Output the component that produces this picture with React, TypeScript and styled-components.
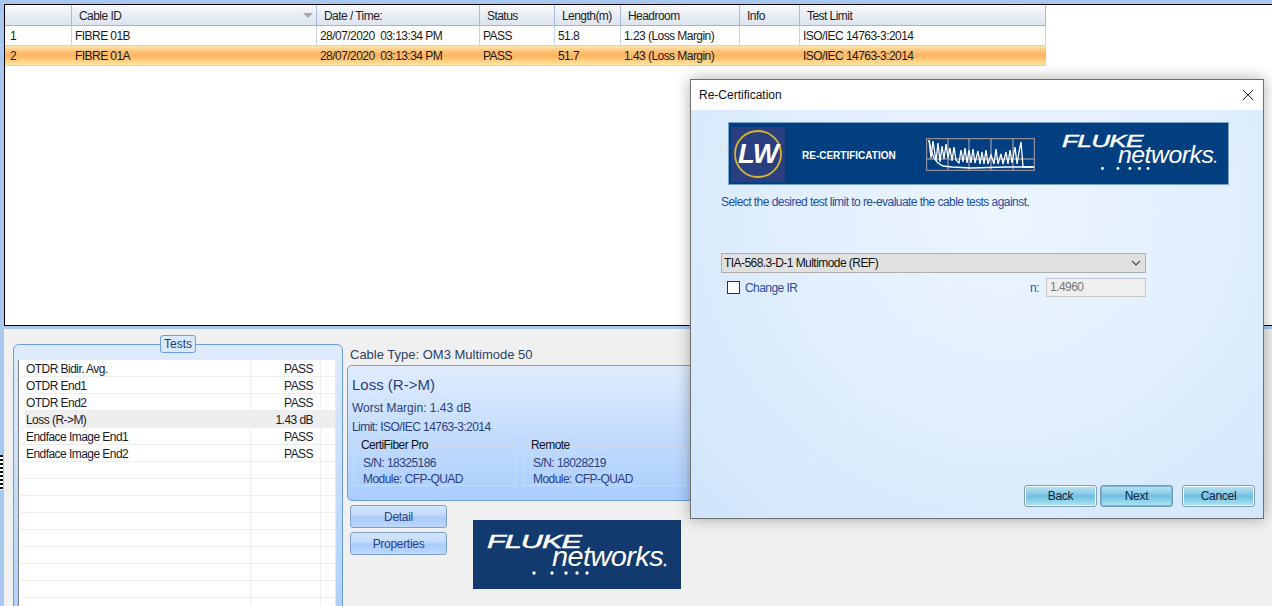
import * as React from 'react';
import styled, { createGlobalStyle } from 'styled-components';

const GlobalStyle = createGlobalStyle`
  html, body {
    margin: 0;
    padding: 0;
    background: #f0f0f0;
  }
  body {
    font-family: 'Liberation Sans', Arial, sans-serif;
    font-size: 12px;
    letter-spacing: -0.55px;
    color: #111;
  }
`;

const Page = styled.div`
  position: relative;
  display: flex;
  width: 1272px;
  height: 606px;
  overflow: hidden;
`;

const Rail = styled.div`
  flex: none;
  width: 4px;
  height: 606px;
  padding-top: 455px;
  box-sizing: border-box;
  background: #a9c8f0;
`;

const RailDots = styled.div`
  width: 3px;
  height: 35px;
  background: repeating-linear-gradient(180deg, #111 0 2px, #fff 2px 4px);
`;

const Main = styled.div`
  flex: 1;
  display: flex;
  flex-direction: column;
  min-width: 0;
`;

const TopStrip = styled.div`
  flex: none;
  height: 4px;
  background: #a9c8f0;
`;

const GridPanel = styled.div`
  flex: none;
  height: 322px;
  box-sizing: border-box;
  border: 1px solid #000;
  border-right: 0;
  background: #fff;
`;

const COLUMNS = '67px 245px 163px 75px 66px 119px 60px 246px';

const Table = styled.div`
  width: 1041px;
`;

const HeaderRow = styled.div`
  display: grid;
  grid-template-columns: ${COLUMNS};
  height: 21px;
  box-sizing: border-box;
  border-bottom: 1px solid #9fb6d3;
  background: linear-gradient(180deg, #f7f9fc 0%, #e9eef5 50%, #dce4ee 100%);
`;

const HeaderCell = styled.div`
  position: relative;
  display: flex;
  align-items: center;
  padding: 2px 0 0 7px;
  border-right: 1px solid #a6bcd8;
  color: #1d1d1d;
  white-space: nowrap;
`;

const SortMark = styled.span`
  position: absolute;
  right: 3px;
  top: 8px;
  width: 0;
  height: 0;
  border-left: 5px solid transparent;
  border-right: 5px solid transparent;
  border-top: 5px solid #a8a8a8;
`;

const Row = styled.div<{ $selected?: boolean }>`
  display: grid;
  grid-template-columns: ${COLUMNS};
  height: 20px;
  box-sizing: border-box;
  border-bottom: 1px solid #c6d5e9;
  background: ${(p) =>
    p.$selected
      ? 'linear-gradient(180deg, #fde6ad 0%, #fdc67e 25%, #fdb45f 50%, #fdca7c 72%, #fde49c 100%)'
      : '#fff'};
`;

const Cell = styled.div<{ $selected?: boolean }>`
  display: flex;
  align-items: center;
  padding-left: 3px;
  border-right: 1px solid ${(p) => (p.$selected ? 'transparent' : '#c6d5e9')};
  color: #1a1a1a;
  white-space: pre;

  &:first-child {
    padding-left: 5px;
  }
`;

const Bottom = styled.div`
  flex: 1;
  display: flex;
  gap: 4px;
  padding: 15px 0 0 9px;
  border-top: 3px solid #a9c8f0;
  min-height: 0;
`;

const TestsGroup = styled.div`
  position: relative;
  flex: none;
  width: 330px;
  height: 300px;
  box-sizing: border-box;
  padding: 15px 6px 0 4px;
  border: 1px solid #6d9ce0;
  border-radius: 6px;
  background: linear-gradient(180deg, #dfebfc 0%, #a9cdfd 100%);
`;

const TestsTitle = styled.div`
  position: absolute;
  left: 146px;
  top: -10px;
  width: 36px;
  height: 18px;
  box-sizing: border-box;
  display: flex;
  align-items: center;
  justify-content: center;
  border: 1px solid #6d9ce0;
  border-radius: 3px;
  background: #dbe9fc;
  letter-spacing: 0;
  color: #24406f;
`;

const TestList = styled.div`
  height: 290px;
  box-sizing: border-box;
  padding-left: 1px;
  border-left: 1px solid #808080;
  border-right: 1px solid #e8e8e8;
  background: #fff;
`;

const TestRow = styled.div<{ $active?: boolean }>`
  display: grid;
  grid-template-columns: 231px 70px 15px;
  height: 17px;
  box-sizing: border-box;
  border-bottom: 1px solid #eeeeee;
  background: ${(p) =>
    p.$active ? 'linear-gradient(90deg, #fff 0 5px, #eeeeee 5px)' : '#fff'};
`;

const TestName = styled.div`
  display: flex;
  align-items: center;
  padding: 1px 0 0 6px;
  border-right: 1px solid #eeeeee;
  color: #1a1a2a;
`;

const TestValue = styled.div`
  display: flex;
  align-items: center;
  justify-content: flex-end;
  padding: 1px 7px 0 0;
  border-right: 1px solid #eeeeee;
  color: #1a1a2a;
`;

const Details = styled.div`
  flex: none;
  width: 600px;
`;

const CableType = styled.div`
  margin: 4px 0 3px 3px;
  height: 14px;
  line-height: 14px;
  font-size: 13px;
  letter-spacing: 0;
  color: #2b3f66;
`;

const ResultPanel = styled.div`
  height: 136px;
  box-sizing: border-box;
  padding: 10px 0 0 4px;
  border: 1px solid #6d9ce0;
  border-radius: 5px;
  background: linear-gradient(180deg, #e0ecfd 0%, #a9cdfd 100%);
  color: #2b3f7a;
`;

const ResultTitle = styled.div`
  height: 18px;
  line-height: 18px;
  font-size: 15px;
  letter-spacing: 0;
`;

const ResultLine = styled.div`
  height: 19px;
  line-height: 19px;
`;

const Worst = styled(ResultLine)`
  margin-top: 5px;
  letter-spacing: 0;
`;

const Units = styled.div`
  display: flex;
  gap: 7px;
  margin: 3px 0 0 1px;
`;

const Unit = styled.fieldset`
  width: 163px;
  height: 46px;
  box-sizing: border-box;
  margin: 0;
  padding: 3px 0 0 9px;
  border: 1px solid #cfdbe8;
  line-height: 16px;
`;

const UnitName = styled.legend`
  margin-left: -2px;
  padding: 0;
  height: 12px;
  line-height: 11px;
  color: #111;
`;

const Actions = styled.div`
  display: flex;
  margin-top: 4px;
  padding-left: 3px;
`;

const ActionStack = styled.div`
  display: flex;
  flex-direction: column;
  gap: 4px;
`;

const ActionButton = styled.button`
  width: 97px;
  height: 23px;
  padding: 0;
  border: 1px solid #7d9fc9;
  border-radius: 3px;
  background: linear-gradient(180deg, #d3e5fc 0%, #c5dcfb 40%, #a9cbf8 55%, #bcd8fd 100%);
  font: 12px 'Liberation Sans', Arial, sans-serif;
  letter-spacing: -0.3px;
  color: #2b3f8a;
`;

const LogoBox = styled.div`
  width: 208px;
  height: 69px;
  margin: 15px 0 0 26px;
  background: #123a6e;
`;

const Dialog = styled.div`
  position: absolute;
  left: 690px;
  top: 79px;
  width: 574px;
  height: 440px;
  box-sizing: border-box;
  display: flex;
  flex-direction: column;
  border: 1px solid #6f6f6f;
  box-shadow: 0 0 14px rgba(0, 0, 0, 0.32);
  background: #fff;
`;

const DialogTitleBar = styled.div`
  flex: none;
  height: 30px;
  display: flex;
  align-items: center;
  justify-content: space-between;
  padding: 0 9px 0 8px;
  letter-spacing: 0;
  color: #111;
`;

const DialogBody = styled.div`
  flex: 1;
  display: flex;
  flex-direction: column;
  padding: 12px 0 11px 30px;
  background:
    linear-gradient(128deg, transparent 0 44%, rgba(255, 255, 255, 0.1) 44.2%, transparent 44.6%),
    linear-gradient(62deg, transparent 0 58%, rgba(255, 255, 255, 0.08) 58.2%, transparent 58.6%),
    radial-gradient(ellipse at 55% 25%, #ecf5ff 0%, #e2effd 45%, #d0e5fb 100%);
`;

const Banner = styled.div`
  flex: none;
  width: 501px;
  height: 63px;
  box-sizing: border-box;
  margin-left: 7px;
  display: flex;
  align-items: flex-start;
  border: 1px solid #7ba2cc;
  background: #023f80;
`;

const BadgeTile = styled.div`
  flex: none;
  width: 54px;
  height: 55px;
  margin: 4px 0 0 2px;
  background: #2a3f80;
`;

const BannerLabel = styled.div`
  flex: none;
  width: 108px;
  margin: 26px 0 0 17px;
  font-size: 10px;
  letter-spacing: 0;
  line-height: 14px;
  font-weight: bold;
  color: #fff;
  white-space: nowrap;
`;

const GraphSlot = styled.div`
  flex: none;
  margin: 15px 0 0 16px;
  width: 109px;
  height: 33px;
`;

const BannerLogo = styled.div`
  flex: none;
  margin-left: 15px;
`;

const Hint = styled.div`
  height: 14px;
  line-height: 14px;
  margin-top: 10px;
  color: #1f4fa5;
`;

const LimitSelect = styled.div`
  width: 425px;
  height: 20px;
  box-sizing: border-box;
  margin-top: 44px;
  display: flex;
  align-items: center;
  justify-content: space-between;
  padding: 0 4px 0 2px;
  border: 1px solid #adadad;
  background: #e1e1e1;
  color: #111;
`;

const OptionRow = styled.div`
  width: 425px;
  height: 19px;
  margin-top: 5px;
  box-sizing: border-box;
  padding-left: 6px;
  display: flex;
  align-items: center;
`;

const CheckBox = styled.span`
  width: 13px;
  height: 13px;
  box-sizing: border-box;
  border: 1px solid #333;
  background: #fff;
  margin-right: 5px;
`;

const BlueLabel = styled.span`
  color: #2b4f9e;
`;

const IndexLabel = styled(BlueLabel)`
  margin-left: auto;
  margin-right: 7px;
`;

const IndexInput = styled.div`
  width: 100px;
  height: 19px;
  box-sizing: border-box;
  padding-left: 3px;
  line-height: 17px;
  border: 1px solid #c9c9c9;
  background: #efefef;
  color: #777;
`;

const DialogFooter = styled.div`
  margin-top: auto;
  display: flex;
  justify-content: flex-end;
  padding-right: 8px;
`;

const WizardButton = styled.button<{ $focused?: boolean; $gapLeft?: number }>`
  width: 73px;
  height: 22px;
  padding: 0;
  margin-left: ${(p) => p.$gapLeft ?? 0}px;
  border: 1px solid ${(p) => (p.$focused ? '#6f9dbb' : '#7f9db5')};
  border-radius: 3px;
  box-shadow: inset 0 0 0 1px ${(p) => (p.$focused ? '#7fb2cf' : '#f2fbff')};
  background: linear-gradient(180deg, #b9e3f4 0%, #8fd0ea 35%, #6fbfe0 50%, #8fd4ea 75%, #aee3f2 100%);
  font: 12px 'Liberation Sans', Arial, sans-serif;
  letter-spacing: -0.3px;
  color: #10233f;
`;

const tableRows = [
  ['1', 'FIBRE 01B', '28/07/2020  03:13:34 PM', 'PASS', '51.8', '1.23 (Loss Margin)', '', 'ISO/IEC 14763-3:2014'],
  ['2', 'FIBRE 01A', '28/07/2020  03:13:34 PM', 'PASS', '51.7', '1.43 (Loss Margin)', '', 'ISO/IEC 14763-3:2014'],
];

const tests = [
  ['OTDR Bidir. Avg.', 'PASS'],
  ['OTDR End1', 'PASS'],
  ['OTDR End2', 'PASS'],
  ['Loss (R->M)', '1.43 dB'],
  ['Endface Image End1', 'PASS'],
  ['Endface Image End2', 'PASS'],
  ...Array.from({ length: 10 }, () => ['', '']),
];

const FlukeLogo = ({ scale }: { scale: number }) => (
  <svg width={208 * scale} height={69 * scale} viewBox="0 0 208 69" style={{ display: 'block' }}>
    <g fill="#fff" fontFamily="'Liberation Sans', Arial, sans-serif" fontStyle="italic">
      <text x="14" y="28" fontSize="19" stroke="#fff" strokeWidth="0.5" textLength="94" lengthAdjust="spacingAndGlyphs">FLUKE</text>
      <text x="79" y="46" fontSize="27" textLength="111" lengthAdjust="spacingAndGlyphs">networks</text>
      <circle cx="192" cy="45" r="1.5" opacity="0.8" />
      {[61, 79, 93, 104, 114].map((x) => (
        <circle key={x} cx={x} cy="53" r="1.7" />
      ))}
    </g>
  </svg>
);

const LwBadge = () => (
  <svg width="54" height="55" viewBox="0 0 54 55" style={{ display: 'block' }}>
    <circle cx="27" cy="27" r="23" fill="none" stroke="#d8b52e" strokeWidth="1.8" />
    <text
      x="27"
      y="36"
      textAnchor="middle"
      fill="#fff"
      fontFamily="'Liberation Sans', Arial, sans-serif"
      fontStyle="italic"
      fontWeight="bold"
      fontSize="27"
      textLength="40"
      lengthAdjust="spacingAndGlyphs"
    >
      LW
    </text>
  </svg>
);

const TRACE_A =
  '3,2 5,20 7,3 10,23 12,5 14,24 16,8 18,21 20,6 22,20 24,10 26,23 28,9 30,22 33,25 35,12 37,24 39,10 41,25 43,12 45,25 47,11 49,25 52,13 54,26 56,14 58,26 60,12 62,26 65,17 68,26 70,11 72,26 75,16 77,26 80,14 82,26 84,12 86,25 89,9 91,26 93,14 95,4 96,16 97,29 108,29';
const TRACE_B = '3,2 5,12 8,20 12,25 17,28 26,29 45,30 80,29 108,29';

const TraceGraph = () => (
  <svg width="109" height="33" viewBox="0 0 109 33" style={{ display: 'block' }}>
    <g stroke="#8f8f9f" strokeWidth="1.4" fill="none">
      <rect x="0.5" y="0.5" width="108" height="32" />
      <path d="M22 0V33M43 0V33M65 0V33M87 0V33M0 21H109" />
    </g>
    <polyline points={TRACE_A} fill="none" stroke="#fff" strokeWidth="1.3" />
    <polyline points={TRACE_B} fill="none" stroke="#fff" strokeWidth="1.3" />
  </svg>
);

export default function App() {
  return (
    <Page>
      <GlobalStyle />
      <Rail>
        <RailDots />
      </Rail>
      <Main>
        <TopStrip />
        <GridPanel>
          <Table>
            <HeaderRow>
              <HeaderCell />
              <HeaderCell>
                Cable ID
                <SortMark />
              </HeaderCell>
              <HeaderCell>Date / Time:</HeaderCell>
              <HeaderCell>Status</HeaderCell>
              <HeaderCell>Length(m)</HeaderCell>
              <HeaderCell>Headroom</HeaderCell>
              <HeaderCell>Info</HeaderCell>
              <HeaderCell>Test Limit</HeaderCell>
            </HeaderRow>
            {tableRows.map((cells, i) => (
              <Row key={cells[0]} $selected={i === 1}>
                {cells.map((text, j) => (
                  <Cell key={j} $selected={i === 1}>
                    {text}
                  </Cell>
                ))}
              </Row>
            ))}
          </Table>
        </GridPanel>
        <Bottom>
          <TestsGroup>
            <TestsTitle>Tests</TestsTitle>
            <TestList>
              {tests.map(([name, value], i) => (
                <TestRow key={i} $active={name.startsWith('Loss')}>
                  <TestName>{name}</TestName>
                  <TestValue>{value}</TestValue>
                  <div />
                </TestRow>
              ))}
            </TestList>
          </TestsGroup>
          <Details>
            <CableType>Cable Type: OM3 Multimode 50</CableType>
            <ResultPanel>
              <ResultTitle>Loss (R-&gt;M)</ResultTitle>
              <Worst>Worst Margin: 1.43 dB</Worst>
              <ResultLine>Limit: ISO/IEC 14763-3:2014</ResultLine>
              <Units>
                <Unit>
                  <UnitName>CertiFiber Pro</UnitName>
                  <div>S/N: 18325186</div>
                  <div>Module: CFP-QUAD</div>
                </Unit>
                <Unit>
                  <UnitName>Remote</UnitName>
                  <div>S/N: 18028219</div>
                  <div>Module: CFP-QUAD</div>
                </Unit>
              </Units>
            </ResultPanel>
            <Actions>
              <ActionStack>
                <ActionButton>Detail</ActionButton>
                <ActionButton>Properties</ActionButton>
              </ActionStack>
              <LogoBox>
                <FlukeLogo scale={1} />
              </LogoBox>
            </Actions>
          </Details>
        </Bottom>
      </Main>
      <Dialog>
        <DialogTitleBar>
          Re-Certification
          <svg width="12" height="12" viewBox="0 0 12 12">
            <path d="M1 1L11 11M11 1L1 11" stroke="#222" strokeWidth="1" fill="none" />
          </svg>
        </DialogTitleBar>
        <DialogBody>
          <Banner>
            <BadgeTile>
              <LwBadge />
            </BadgeTile>
            <BannerLabel>RE-CERTIFICATION</BannerLabel>
            <GraphSlot>
              <TraceGraph />
            </GraphSlot>
            <BannerLogo>
              <FlukeLogo scale={0.86} />
            </BannerLogo>
          </Banner>
          <Hint>Select the desired test limit to re-evaluate the cable tests against.</Hint>
          <LimitSelect>
            TIA-568.3-D-1 Multimode (REF)
            <svg width="10" height="6" viewBox="0 0 10 6">
              <path d="M1 1L5 5L9 1" stroke="#444" strokeWidth="1.1" fill="none" />
            </svg>
          </LimitSelect>
          <OptionRow>
            <CheckBox />
            <BlueLabel>Change IR</BlueLabel>
            <IndexLabel>n:</IndexLabel>
            <IndexInput>1.4960</IndexInput>
          </OptionRow>
          <DialogFooter>
            <WizardButton>Back</WizardButton>
            <WizardButton $focused $gapLeft={3}>
              Next
            </WizardButton>
            <WizardButton $gapLeft={9}>Cancel</WizardButton>
          </DialogFooter>
        </DialogBody>
      </Dialog>
    </Page>
  );
}
